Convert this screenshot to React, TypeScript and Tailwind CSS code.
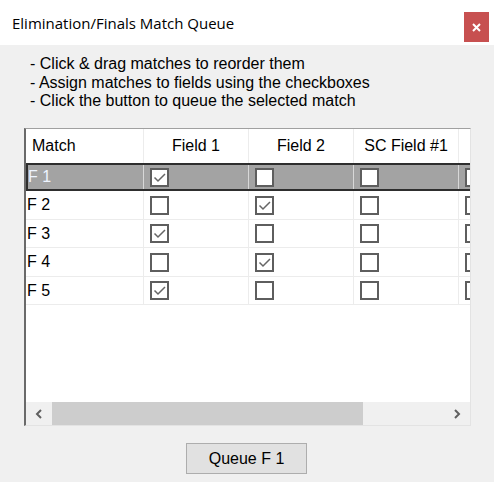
import React from "react";

const rows = [
  { name: "F 1", checks: [true, false, false, false], selected: true },
  { name: "F 2", checks: [false, true, false, false], selected: false },
  { name: "F 3", checks: [true, false, false, false], selected: false },
  { name: "F 4", checks: [false, true, false, false], selected: false },
  { name: "F 5", checks: [true, false, false, false], selected: false },
];

const rowHeights = ["h-[28px]", "h-[29px]", "h-[28px]", "h-[29px]", "h-[28px]"];

function Box({ checked }: { checked: boolean }) {
  return (
    <div className="w-[19px] h-[19px] border-2 border-[#5e5e5e] bg-white flex items-center justify-center shrink-0">
      {checked && (
        <svg width="15" height="15" viewBox="0 0 15 15">
          <polyline points="2.5,7.5 6,11 13,4" fill="none" stroke="#666666" strokeWidth="1.5" />
        </svg>
      )}
    </div>
  );
}

export default function App() {
  return (
    <div className="w-[494px] h-[482px] bg-[#f0f0f0] flex flex-col" style={{ fontFamily: '"Liberation Sans", Arial, sans-serif' }}>
      <div className="h-[45px] bg-white flex items-start shrink-0">
        <div className="pl-[12px] pt-[12px] text-[15px] text-black" style={{ fontFamily: '"Open Sans", "Noto Sans", sans-serif' }}>
          Elimination/Finals Match Queue
        </div>
        <div className="ml-auto mr-[5px] mt-[12px] w-[25px] h-[30px] bg-[#c75050] flex items-center justify-center">
          <svg width="9" height="9" viewBox="0 0 9 9">
            <path d="M1 1 L8 8 M8 1 L1 8" stroke="white" strokeWidth="2" />
          </svg>
        </div>
      </div>
      <div className="pl-[30px] pt-[10px] text-[16px] leading-[18.5px] text-black">
        <div>- Click &amp; drag matches to reorder them</div>
        <div>- Assign matches to fields using the checkboxes</div>
        <div>- Click the button to queue the selected match</div>
      </div>
      <div className="ml-[24px] mt-[17.5px] w-[447px] h-[298px] border-t border-l-2 border-t-[#a0a0a0] border-l-[#6a6a6a] border-r border-b border-r-[#e3e3e3] border-b-[#e3e3e3] bg-white flex flex-col overflow-hidden">
        <div className="flex-1 overflow-hidden">
          <div className="flex h-[34px] text-[16px] text-black">
            <div className="w-[118px] shrink-0 border-r border-[#ececec] flex items-center pl-[6px]">Match</div>
            <div className="w-[105px] shrink-0 border-r border-[#ececec] flex items-center justify-center">Field 1</div>
            <div className="w-[105px] shrink-0 border-r border-[#ececec] flex items-center justify-center">Field 2</div>
            <div className="w-[105px] shrink-0 border-r border-[#ececec] flex items-center justify-center">SC Field #1</div>
            <div className="w-[105px] shrink-0" />
          </div>
          {rows.map((r, i) => (
            <div
              key={r.name}
              className={`flex ${rowHeights[i]} text-[16px] ${r.selected ? "bg-[#a3a3a3] border-y-2 border-[#2e2e2e]" : "border-b border-[#ececec]"}`}
            >
              <div className={`w-[118px] shrink-0 border-r flex items-center ${r.selected ? "border-[#d8d8d8] text-[#eef4ff] border-l-2 border-l-[#2e2e2e] pl-0" : "border-[#ececec] text-black pl-[1px]"}`}>
                {r.name}
              </div>
              {r.checks.map((c, j) => (
                <div key={j} className={`w-[105px] shrink-0 flex items-center pl-[6px] ${j < 3 ? "border-r" : ""} ${r.selected ? "border-[#d8d8d8]" : "border-[#ececec]"}`}>
                  <Box checked={c} />
                </div>
              ))}
            </div>
          ))}
        </div>
        <div className="h-[23px] bg-[#f0f0f0] flex items-center shrink-0">
          <div className="w-[26px] h-full flex items-center justify-center">
            <svg width="8" height="10" viewBox="0 0 8 10">
              <path d="M6 1 L2 5 L6 9" fill="none" stroke="#606060" strokeWidth="2" />
            </svg>
          </div>
          <div className="w-[311px] h-full bg-[#cdcdcd]" />
          <div className="flex-1" />
          <div className="w-[26px] h-full flex items-center justify-center">
            <svg width="8" height="10" viewBox="0 0 8 10">
              <path d="M2 1 L6 5 L2 9" fill="none" stroke="#606060" strokeWidth="2" />
            </svg>
          </div>
        </div>
      </div>
      <div className="flex justify-center mt-[17px]">
        <div className="ml-[-1px] w-[121px] h-[31px] bg-[#e1e1e1] border border-[#adadad] flex items-center justify-center text-[16px] text-black">
          Queue F 1
        </div>
      </div>
    </div>
  );
}
